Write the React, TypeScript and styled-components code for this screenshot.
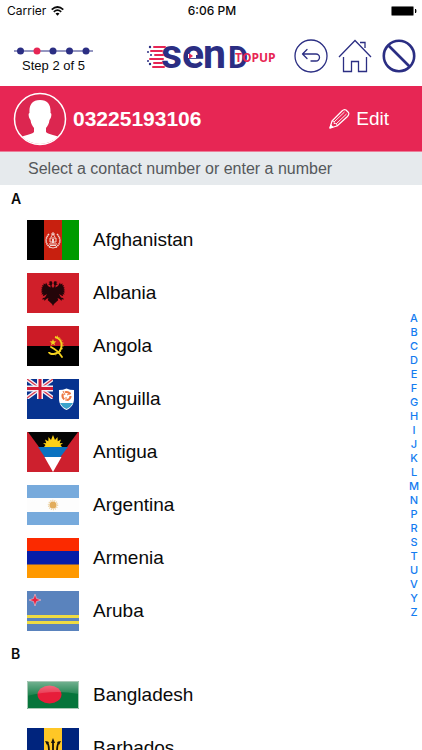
import React from "react";
import styled, { createGlobalStyle } from "styled-components";

const navy = "#2b2e83";
const pink = "#e72654";
const sans = '"Liberation Sans", Arial, sans-serif';
const system = 'Inter, "Liberation Sans", sans-serif';

const GlobalStyle = createGlobalStyle`
  * { box-sizing: border-box; }
  body { margin: 0; background: #fff; color: #0a0a0a; font-family: ${sans}; }
  button { margin: 0; padding: 0; border: 0; background: none; color: inherit; font: inherit; cursor: pointer; }
  svg { display: block; flex-shrink: 0; }
`;

const Screen = styled.div`
  display: flex;
  flex-direction: column;
  height: 100vh;
  overflow: hidden;
`;

const StatusBar = styled.div`
  display: grid;
  grid-template-columns: 1fr auto 1fr;
  align-items: center;
  flex-shrink: 0;
  height: 22px;
  padding: 0 5px 0 7px;
  font: 400 12px/22px ${system};
`;

const Carrier = styled.div`
  display: flex;
  align-items: center;
  gap: 5px;
`;

const Clock = styled.time`
  font-weight: 500;
`;

const Battery = styled.svg`
  justify-self: end;
`;

const TopBar = styled.header`
  display: flex;
  align-items: center;
  justify-content: space-between;
  flex-shrink: 0;
  height: 64px;
  padding: 4px 6px 0 14px;
`;

const Steps = styled.div`
  display: flex;
  flex-direction: column;
  align-items: center;
  gap: 3px;
  width: 79px;
  padding-top: 8px;
  font-size: 13px;
  line-height: 16px;
  white-space: nowrap;
`;

const Actions = styled.nav`
  display: flex;
  align-items: center;
  gap: 10px;
`;

const IconButton = styled.button`
  display: block;
`;

const Brand = styled.div`
  margin-left: 36px;
`;

const Account = styled.section`
  display: flex;
  align-items: center;
  flex-shrink: 0;
  height: 66px;
  padding: 0 33px 0 13px;
  background: ${pink};
  border-bottom: 1px solid #eb7f9a;
  color: #fff;
`;

const PhoneNumber = styled.strong`
  flex: 1;
  margin-left: 6px;
  font-size: 21px;
  line-height: 24px;
`;

const EditButton = styled.button`
  display: flex;
  align-items: center;
  gap: 6px;
  && {
    font-size: 19px;
    line-height: 24px;
  }
`;

const Hint = styled.p`
  flex-shrink: 0;
  margin: 0;
  padding: 0 28px;
  height: 33px;
  background: #e6eaed;
  color: #55585b;
  font-size: 16px;
  line-height: 34px;
`;

const Body = styled.main`
  display: flex;
  flex: 1;
  min-height: 0;
`;

const Sections = styled.div`
  flex: 1;
  overflow-y: auto;
  scrollbar-width: none;
`;

const Section = styled.section`
  & + & {
    padding-top: 3px;
  }
`;

const Letter = styled.h2`
  margin: 0;
  padding-left: 11px;
  font: 600 14px/28px ${system};
`;

const Countries = styled.ul`
  margin: 0;
  padding: 0;
  list-style: none;
`;

const CountryButton = styled.button`
  display: flex;
  align-items: center;
  gap: 14px;
  width: 100%;
  height: 53px;
  && {
    padding-left: 27px;
    font-size: 19px;
    line-height: 24px;
  }
`;

const LetterIndex = styled.nav`
  display: flex;
  flex-direction: column;
  align-self: center;
  align-items: center;
  width: 16px;
  padding-bottom: 6px;
`;

const IndexLink = styled.a`
  color: #147cf0;
  font: 500 11px/14px ${system};
  text-decoration: none;
`;

function Afghanistan() {
  return (
    <>
      <path fill="#000" d="M0 0h18v40H0z" />
      <path fill="#c8200f" d="M17 0h18v40H17z" />
      <path fill="#009a00" d="M35 0h17v40H35z" />
      <g fill="none" stroke="#f3d5d0">
        <path strokeWidth="1.6" strokeDasharray="1.5 .5" d="M22 14c-4 4-4 10 1 13M30 14c4 4 4 10-1 13" />
        <path strokeWidth="1" d="M22 24h8M23 22v-4h6v4zM24 17l2-3 2 3M26 12v2M22 27q4 2 8 0M24 14h4" />
      </g>
      <path fill="#f3d5d0" d="M23 25h6v1h-6zM25 19h2v4h-2z" />
    </>
  );
}

function Albania() {
  const wing = "M26 15l-1.500-2 1-3-1.200-2-2.800 1 1.500 1-1.800 1.500 2 .5.400 2.500-2.600-1.500-2-3.500-.6 2-1.800-1.200v2.200l-1.600-.4.8 2-1.600.6 1.300 1.300-1.700.9 1.600.9-1.600 1.400 1.800.3-1.200 2 2-.3-.6 2 1.800-.8 2.400-1.400-2 3.400-2 .6-1 1.500 2.200-.2.4 1.600 1.600-1.800 2.200-1.200-.6 2.400 1.500 1.200L25 31l1 2z";
  return (
    <>
      <path fill="#d01f2a" d="M0 0h52v40H0z" />
      <path fill="#240509" d={wing} />
      <path fill="#240509" transform="matrix(-1 0 0 1 52 0)" d={wing} />
    </>
  );
}

function Angola() {
  return (
    <>
      <path fill="#cc1b26" d="M0 0h52v20H0z" />
      <path fill="#000" d="M0 20h52v20H0z" />
      <path fill="none" stroke="#f4d21f" strokeWidth="2" d="M28 11c9 2 9 15-1 17-3 .4-5-1-5-2" />
      <path fill="none" stroke="#f4d21f" strokeWidth="1" strokeDasharray="1 2" d="M30 10c9 4 8 16-2 19" />
      <path stroke="#f4d21f" strokeWidth="1.8" strokeLinecap="round" d="M24 21c4 2 8 5 11 10" fill="none" />
      <path fill="#f4d21f" d="M26 13l.9 2.3 2.5.1-2 1.5.7 2.4-2.1-1.4-2.1 1.4.7-2.4-2-1.5 2.5-.1z" />
    </>
  );
}

function Anguilla() {
  return (
    <>
      <path fill="#07338f" d="M0 0h52v40H0z" />
      <path stroke="#f2eff5" strokeWidth="4" d="M0 0l26 19M26 0L0 19" />
      <path stroke="#d8364b" strokeWidth="1.3" d="M0 0l26 19M26 0L0 19" />
      <path stroke="#f2eff5" strokeWidth="6" d="M13 0v20M0 9.500h26" />
      <path stroke="#d41c35" strokeWidth="3" d="M13 0v20M0 9.500h26" />
      <path fill="#07338f" d="M26 0h3v20h-3zM0 20h27v2H0z" />
      <path fill="#fff" d="M32 11q4 0 7.500-1.500Q43 11 47 11v9c0 5-3 9-7.500 11C35 29 32 25 32 20z" />
      <path fill="#3aa3cb" d="M33 24h13q-2 4-6.500 6Q35 28 33 24z" />
      <circle cx="39.500" cy="17" r="4" fill="none" stroke="#ed7842" strokeWidth="2.200" strokeDasharray="6 2.400" />
      <path stroke="#ed7842" strokeWidth="1" d="M36 12l2 4M44 14l-4 2M39 22v-4" />
    </>
  );
}

function Antigua() {
  return (
    <>
      <path fill="#cd202e" d="M0 0h52v40H0z" />
      <path fill="#050505" d="M1 0h50L40 15H12z" />
      <path fill="#0a72c0" d="M11 15h30L33 25.500H18z" />
      <path fill="#fff" d="M17.500 25h17L26 40z" />
      <path fill="#fcd116" d="M17 15l1.500-2L16 11l3.300.2L18 7.500l3.300 1.800L21.500 5l2.500 3L26 3l2 5 2.500-3 .2 4.300L34 7.500l-1.300 3.700L36 11l-2.500 2L35 15z" />
    </>
  );
}

function Argentina() {
  return (
    <>
      <path fill="#fdfdfd" d="M0 0h52v40H0z" />
      <path fill="#77aadc" d="M0 0h52v13H0zM0 27h52v13H0z" />
      <circle cx="26" cy="20" r="4.500" fill="none" stroke="#edd3a2" strokeWidth="1.500" strokeDasharray="1 1" />
      <circle cx="26" cy="20" r="3.500" fill="#e2ad5d" />
    </>
  );
}

function Armenia() {
  return (
    <>
      <path fill="#fb2a00" d="M0 0h52v13.500H0z" />
      <path fill="#061da8" d="M0 13h52v14H0z" />
      <path fill="#ff9900" d="M0 26.500h52V40H0z" />
    </>
  );
}

function Aruba() {
  return (
    <>
      <path fill="#5a83bd" d="M0 0h52v40H0z" />
      <path fill="#eedb42" d="M0 24h52v3H0zM0 30h52v3H0z" />
      <path fill="#e92240" stroke="#f0c4d0" strokeWidth=".6" d="M8 3l1.500 4.500L14 9l-4.500 1.500L8 15l-1.500-4.500L2 9l4.500-1.500z" />
    </>
  );
}

function Bangladesh() {
  return (
    <>
      <defs>
        <linearGradient id="gloss" x2="0" y2="1">
          <stop stopColor="#fff" stopOpacity=".45" />
          <stop offset="1" stopColor="#fff" stopOpacity=".08" />
        </linearGradient>
      </defs>
      <path fill="#06753b" d="M0 6h52v28H0z" />
      <ellipse cx="22.500" cy="19.500" rx="12" ry="9" fill="#e71d3a" />
      <path fill="url(#gloss)" d="M0 6h52v13Q26 14 0 21z" />
      <path fill="none" stroke="#a9c9b6" d="M.5 6.500h51v27H.5z" />
    </>
  );
}

function Barbados() {
  return (
    <>
      <path fill="#00247d" d="M0 0h52v40H0z" />
      <path fill="#ffc726" d="M17 0h18v40H17z" />
      <path fill="none" stroke="#15120a" strokeWidth="1.800" d="M26 13v17M19.500 14c2 1 2.500 5 2.500 10h8c0-5 .5-9 2.500-10" />
      <path fill="#15120a" d="M26 10l2 5h-4zM18 13l4 1-2 3zM34 13l-4 1 2 3z" />
    </>
  );
}

const sections = [
  {
    letter: "A",
    countries: [
      { name: "Afghanistan", Art: Afghanistan },
      { name: "Albania", Art: Albania },
      { name: "Angola", Art: Angola },
      { name: "Anguilla", Art: Anguilla },
      { name: "Antigua", Art: Antigua },
      { name: "Argentina", Art: Argentina },
      { name: "Armenia", Art: Armenia },
      { name: "Aruba", Art: Aruba },
    ],
  },
  {
    letter: "B",
    countries: [
      { name: "Bangladesh", Art: Bangladesh },
      { name: "Barbados", Art: Barbados },
    ],
  },
];

const letters = "ABCDEFGHIJKLMNPRSTUVYZ".split("");

function WifiIcon() {
  return (
    <svg width="13" height="10" viewBox="0 0 13 10" aria-hidden="true">
      <g fill="none" stroke="#0a0a0a" strokeWidth="1.700">
        <path d="M.7 3.600Q6.500-1.600 12.300 3.600" />
        <path d="M2.800 5.900Q6.500 2.500 10.200 5.900" />
      </g>
      <path d="M6.500 9.700L4.500 7.600Q6.500 6 8.500 7.600z" />
    </svg>
  );
}

function Logo() {
  return (
    <svg width="132" height="52" viewBox="0 0 132 52" role="img" aria-label="Send Topup">
      <g fill={navy} fontFamily="Roboto, sans-serif" fontWeight="700">
        <text x="15" y="38" fontSize="41">s</text>
        <text x="36" y="38" fontSize="41">e</text>
        <text x="57" y="38" fontSize="41">n</text>
        <text x="82" y="38" fontSize="31">D</text>
      </g>
      <g stroke={pink} strokeWidth="2" strokeLinecap="round">
        <path d="M8 17h11M5 21h11M9 25h8M4 29h13M8 33h8M7 37h11" />
      </g>
      <g fill={navy}>
        <circle cx="4" cy="17" r="1.200" />
        <circle cx="2" cy="22" r="1" />
        <circle cx="5" cy="25" r="1" />
        <circle cx="2" cy="31" r="1" />
        <circle cx="4" cy="34" r="1.200" />
      </g>
      <path fill="#fff" d="M42 24h8v4h-8z" />
      <path fill={pink} d="M43 23l4 3-4 3z" />
      <text x="89" y="32" fill={pink} fontFamily='"Open Sans", sans-serif' fontWeight="700" fontSize="12">TOPUP</text>
    </svg>
  );
}

function Avatar() {
  return (
    <svg width="54" height="54" viewBox="0 0 54 54" aria-hidden="true">
      <clipPath id="face"><circle cx="27" cy="27" r="25" /></clipPath>
      <circle cx="27" cy="27" r="25.500" fill="#dc2650" stroke="#fff" strokeWidth="1.500" />
      <path clipPath="url(#face)" fill="#fff" d="M27 8c8 0 11 5 10.500 13 1.500 0 1 5-1 7-.5 4-2 6-3.500 8v4c2 3 13 3 17 8v6H4v-6c4-5 15-5 17-8v-4c-1.500-2-3-4-3.500-8-2-2-2.500-7-1-7C16 13 19 8 27 8z" />
    </svg>
  );
}

export default function App() {
  return (
    <>
      <GlobalStyle />
      <Screen>
        <StatusBar>
          <Carrier>Carrier <WifiIcon /></Carrier>
          <Clock>6:06 PM</Clock>
          <Battery width="26" height="10" viewBox="0 0 26 10" role="img" aria-label="Battery full">
            <rect x=".5" y=".5" width="22" height="9" rx="1" stroke="#777" />
            <path d="M24 3h1q1 2 0 4h-1z" />
          </Battery>
        </StatusBar>

        <TopBar>
          <Steps>
            <svg width="79" height="8" viewBox="0 0 79 8" aria-hidden="true">
              <path stroke={navy} d="M0 4h79" />
              {[6.5, 23, 39, 55.5, 72].map((x, i) => (
                <circle key={x} cx={x} cy="4" r="3.500" fill={i === 1 ? pink : navy} />
              ))}
            </svg>
            <span>Step 2 of 5</span>
          </Steps>
          <Brand><Logo /></Brand>
          <Actions>
            <IconButton aria-label="Back">
              <svg width="34" height="34" viewBox="0 0 34 34" fill="none" stroke={navy} strokeWidth="1.300">
                <circle cx="17" cy="17" r="16" />
                <path strokeLinecap="round" strokeLinejoin="round" d="M13 10.500L8.500 15 13 19.500M8.500 15H22a3.500 3.500 0 0 1 0 7h-5" />
              </svg>
            </IconButton>
            <IconButton aria-label="Home">
              <svg width="34" height="34" viewBox="0 0 34 34" fill="none" stroke={navy} strokeWidth="1.300">
                <path d="M1 18L17 1.500 33 18M5.500 18v14.500h8v-10h7v10h8V18M22 3.500h5V9" />
              </svg>
            </IconButton>
            <IconButton aria-label="Cancel">
              <svg width="34" height="34" viewBox="0 0 34 34" fill="none" stroke={navy} strokeWidth="2.600">
                <circle cx="17" cy="17" r="15.200" />
                <path d="M6.500 6.500l21 21" />
              </svg>
            </IconButton>
          </Actions>
        </TopBar>

        <Account>
          <Avatar />
          <PhoneNumber>03225193106</PhoneNumber>
          <EditButton>
            <svg width="21" height="20" viewBox="0 0 21 20" fill="none" stroke="#fff" strokeWidth="1.200" strokeLinejoin="round" aria-hidden="true">
              <path d="M1 19l2-7L13 2q2-2 4-1l2.500 2.500q1 2-1 4L8 17z" />
              <path d="M3 12c2 0 2.500 1 2 2.500 2-.5 3 .5 3 2.500M5 13L15.500 3M7 15L17.500 5" strokeWidth=".9" />
              <path fill="#fff" d="M1 19l.8-2.800 2 2z" />
            </svg>
            Edit
          </EditButton>
        </Account>
        <Hint>Select a contact number or enter a number</Hint>

        <Body>
          <Sections>
            {sections.map(({ letter, countries }) => (
              <Section key={letter} id={letter}>
                <Letter>{letter}</Letter>
                <Countries>
                  {countries.map(({ name, Art }) => (
                    <li key={name}>
                      <CountryButton>
                        <svg width="52" height="40" viewBox="0 0 52 40" aria-hidden="true"><Art /></svg>
                        {name}
                      </CountryButton>
                    </li>
                  ))}
                </Countries>
              </Section>
            ))}
          </Sections>
          <LetterIndex aria-label="Country index">
            {letters.map((letter) => (
              <IndexLink key={letter} href={`#${letter}`}>{letter}</IndexLink>
            ))}
          </LetterIndex>
        </Body>
      </Screen>
    </>
  );
}
